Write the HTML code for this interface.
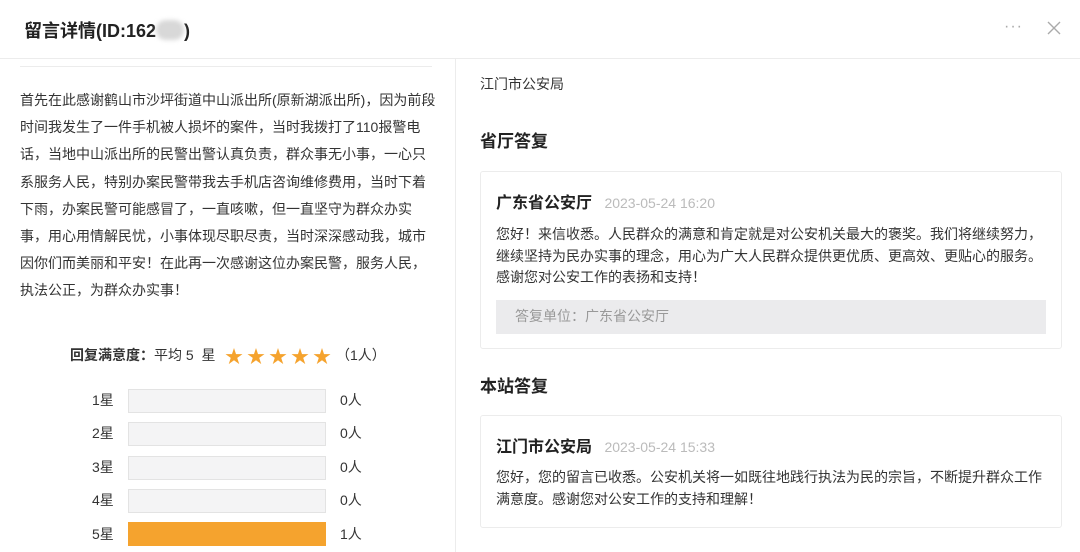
<!DOCTYPE html>
<html><head><meta charset="utf-8"><style>
*{margin:0;padding:0;box-sizing:border-box}
body{width:1080px;height:552px;overflow:hidden;background:#fff;font-family:"Liberation Sans","Noto Sans CJK SC",sans-serif;color:#333;position:relative}
.a{position:absolute;white-space:nowrap}
.hdr{left:0;top:0;width:1080px;height:59px;border-bottom:1px solid #ececec}
.title{left:24px;top:17px;font-size:18px;font-weight:bold;color:#222}
.blur{display:inline-block;width:28px;height:20px;background:#d8d8d8;border-radius:10px;vertical-align:-3px;filter:blur(2px)}
.vl{left:455px;top:59px;width:1px;height:493px;background:#ececec}
.lt{left:20px;top:87px;font-size:14px;line-height:27.2px;color:#333}
.bar{left:128px;width:198px;height:24px;background:#f4f4f5;border:1px solid #e3e3e3}
.lab{font-size:14px;color:#333}
.card{left:480px;width:582px;border:1px solid #ececec;border-radius:3px}
.h2{font-size:17px;font-weight:bold;color:#222}
.body{font-size:14px;line-height:21.5px;color:#333}
.st{color:#f5a32e;font-size:18px}
</style></head><body>
<div class="a hdr"></div>
<div class="a title">留言详情(ID:162<span class="blur"></span>)</div>
<div class="a" style="left:1004px;top:18px;font-size:16px;color:#aaa;letter-spacing:1px">···</div>
<svg class="a" style="left:1047px;top:21px" width="14" height="14"><path d="M1 1L13 13M13 1L1 13" stroke="#aaa" stroke-width="1.4"/></svg>
<div class="a vl"></div>
<div class="a" style="left:20px;top:66px;width:412px;height:1px;background:#ececec"></div>
<div class="a lt">首先在此感谢鹤山市沙坪街道中山派出所(原新湖派出所)，因为前段<br>时间我发生了一件手机被人损坏的案件，当时我拨打了110报警电<br>话，当地中山派出所的民警出警认真负责，群众事无小事，一心只<br>系服务人民，特别办案民警带我去手机店咨询维修费用，当时下着<br>下雨，办案民警可能感冒了，一直咳嗽，但一直坚守为群众办实<br>事，用心用情解民忧，小事体现尽职尽责，当时深深感动我，城市<br>因你们而美丽和平安！在此再一次感谢这位办案民警，服务人民，<br>执法公正，为群众办实事！</div>
<div class="a" style="left:70px;top:345px;font-size:14px"><b>回复满意度：</b>平均 5 &nbsp;星</div>
<div class="a st" style="left:225px;top:343px;letter-spacing:4px">★★★★★</div>
<div class="a lab" style="left:336px;top:345px">（1人）</div>
<div class="a lab" style="left:92px;top:390px">1星</div><div class="a bar" style="top:389px"></div><div class="a lab" style="left:340px;top:390px">0人</div>
<div class="a lab" style="left:92px;top:423px">2星</div><div class="a bar" style="top:422px"></div><div class="a lab" style="left:340px;top:423px">0人</div>
<div class="a lab" style="left:92px;top:457px">3星</div><div class="a bar" style="top:456px"></div><div class="a lab" style="left:340px;top:457px">0人</div>
<div class="a lab" style="left:92px;top:490px">4星</div><div class="a bar" style="top:489px"></div><div class="a lab" style="left:340px;top:490px">0人</div>
<div class="a lab" style="left:92px;top:524px">5星</div><div class="a bar" style="top:522px;background:#f5a32e;border-color:#f5a32e"></div><div class="a lab" style="left:340px;top:524px">1人</div>
<div class="a" style="left:480px;top:74px;font-size:14px">江门市公安局</div>
<div class="a h2" style="left:480px;top:127px">省厅答复</div>
<div class="a card" style="top:171px;height:178px"></div>
<div class="a" style="left:496px;top:189px;font-size:16px;font-weight:bold;color:#222">广东省公安厅 <span style="font-weight:normal;color:#bbb;font-size:14px;margin-left:8px">2023-05-24 16:20</span></div>
<div class="a body" style="left:496px;top:224px">您好！来信收悉。人民群众的满意和肯定就是对公安机关最大的褒奖。我们将继续努力，<br>继续坚持为民办实事的理念，用心为广大人民群众提供更优质、更高效、更贴心的服务。<br>感谢您对公安工作的表扬和支持！</div>
<div class="a" style="left:496px;top:300px;width:550px;height:34px;background:#ebebed"></div>
<div class="a" style="left:515px;top:306px;font-size:14px;color:#999">答复单位：广东省公安厅</div>
<div class="a h2" style="left:480px;top:372px">本站答复</div>
<div class="a card" style="top:415px;height:113px"></div>
<div class="a" style="left:496px;top:433px;font-size:16px;font-weight:bold;color:#222">江门市公安局 <span style="font-weight:normal;color:#bbb;font-size:14px;margin-left:8px">2023-05-24 15:33</span></div>
<div class="a body" style="left:496px;top:467px">您好，您的留言已收悉。公安机关将一如既往地践行执法为民的宗旨，不断提升群众工作<br>满意度。感谢您对公安工作的支持和理解！</div>
</body></html>
